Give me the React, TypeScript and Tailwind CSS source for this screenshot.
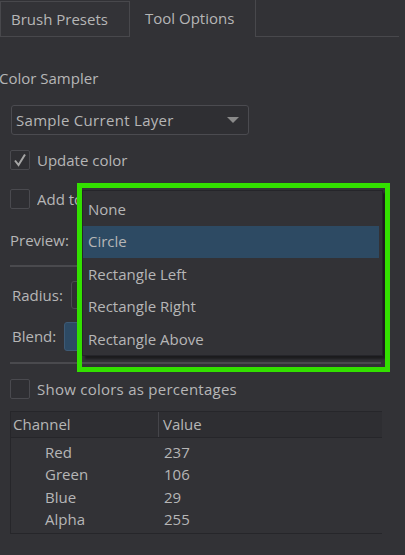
import React from "react";

const channels = [
  { name: "Red", value: "237" },
  { name: "Green", value: "106" },
  { name: "Blue", value: "29" },
  { name: "Alpha", value: "255" },
];

const previewOptions = ["None", "Circle", "Rectangle Left", "Rectangle Right", "Rectangle Above"];

const Check: React.FC<{ checked?: boolean }> = ({ checked }) => (
  <div className="w-[20px] h-[20px] border border-[#4a4a4f] bg-[#2f2f33] rounded-[2px] flex items-center justify-center shrink-0">
    {checked && (
      <svg width="14" height="14" viewBox="0 0 14 14">
        <path d="M2 7.5 L5.5 12 L12 1.5" fill="none" stroke="#a6a6a6" strokeWidth="2" />
      </svg>
    )}
  </div>
);

const App: React.FC = () => {
  return (
    <div
      className="relative w-[405px] h-[555px] overflow-hidden bg-[#323236] text-[#b6b6b6] text-[15px] leading-none"
      style={{ fontFamily: '"Open Sans", "Noto Sans", sans-serif' }}
    >
      {/* tabs */}
      <div className="flex h-[37px]">
        <div className="mt-[1px] w-[130px] h-[36px] border border-[#48484c] bg-[#333337] flex items-center pl-[10px]">
          Brush Presets
        </div>
        <div className="w-[126px] h-[37px] border-r border-[#48484c] flex items-center pl-[15px]">
          Tool Options
        </div>
        <div className="w-[143px] h-[37px] border-b border-[#48484c]" />
      </div>

      <div className="pl-[10px]">
        <div className="mt-[31px] -ml-[11px] h-[20px] flex items-center">Color Sampler</div>

        <div className="mt-[17px] ml-[1px] w-[238px] h-[30px] rounded-[3px] border border-[#4b4b50] bg-[#2f2f33] flex items-center justify-between pl-[4px] pr-[9px]">
          <span className="tracking-[0.3px]">Sample Current Layer</span>
          <svg width="12" height="7" viewBox="0 0 12 7">
            <path d="M0 0 H12 L6 6 Z" fill="#8a8a8a" />
          </svg>
        </div>

        <div className="mt-[15px] flex items-center gap-[7px] h-[20px]">
          <Check checked />
          <span>Update color</span>
        </div>

        <div className="mt-[19px] flex items-center gap-[7px] h-[20px]">
          <Check />
          <span className="w-[40px] overflow-hidden whitespace-nowrap">Add to color history</span>
        </div>

        <div className="mt-[16px] flex items-center h-[30px]">
          <span className="w-[68px]">Preview:</span>
          <div className="w-[304px] h-[30px] rounded-[3px] border border-[#4b4b50] bg-[#2f2f33]" />
        </div>

        <div className="mt-[10px] w-[371px] h-[2px] bg-[#4a4a4e]" />

        <div className="mt-[14px] flex items-center h-[28px]">
          <span className="w-[61px] pl-[2px]">Radius:</span>
          <div className="w-[310px] h-[28px] rounded-[3px] border border-[#4b4b50] bg-[#2f2f33] flex items-center pl-[5px]">
            4
          </div>
        </div>

        <div className="mt-[13px] flex items-center h-[29px]">
          <span className="w-[54px] pl-[2px]">Blend:</span>
          <div className="w-[317px] h-[29px] rounded-[3px] border border-[#3e5a75] bg-[#2d4a64]" />
        </div>

        <div className="mt-[11px] w-[371px] h-[2px] bg-[#4a4a4e]" />

        <div className="mt-[15px] flex items-center gap-[7px] h-[20px]">
          <Check />
          <span className="tracking-[0.25px]">Show colors as percentages</span>
        </div>

        {/* channel table */}
        <div className="mt-[12px] w-[372px] border-l border-t border-b border-[#26262a]">
          <div className="flex h-[26px] bg-[#2e2e32] border-b border-[#26262a]">
            <div className="w-[148px] pl-[2px] border-r border-[#45454a] flex items-center">Channel</div>
            <div className="flex-1 pl-[4px] flex items-center">Value</div>
          </div>
          <div className="pt-[3px] pb-[2px]">
            {channels.map((c) => (
              <div key={c.name} className="flex h-[22.5px] items-center">
                <span className="w-[149px] pl-[34px]">{c.name}</span>
                <span className="pl-[4px]">{c.value}</span>
              </div>
            ))}
          </div>
        </div>
      </div>

      {/* open preview dropdown */}
      <div className="absolute left-[82px] top-[190px] w-[301px] h-[166px] bg-[#323236] border border-[#25252a] shadow-[3px_3px_2px_rgba(0,0,0,0.45)] pt-[2px]">
        {previewOptions.map((o) => (
          <div
            key={o}
            className={`h-[32.5px] mr-[3px] flex items-center pl-[5px] ${o === "Circle" ? "bg-[#2d4a63]" : ""}`}
          >
            {o}
          </div>
        ))}
      </div>

      {/* highlight annotation */}
      <div className="absolute left-[77px] top-[183px] w-[313px] h-[189px] border-[5px] border-[#33e000]" />
    </div>
  );
};

export default App;
